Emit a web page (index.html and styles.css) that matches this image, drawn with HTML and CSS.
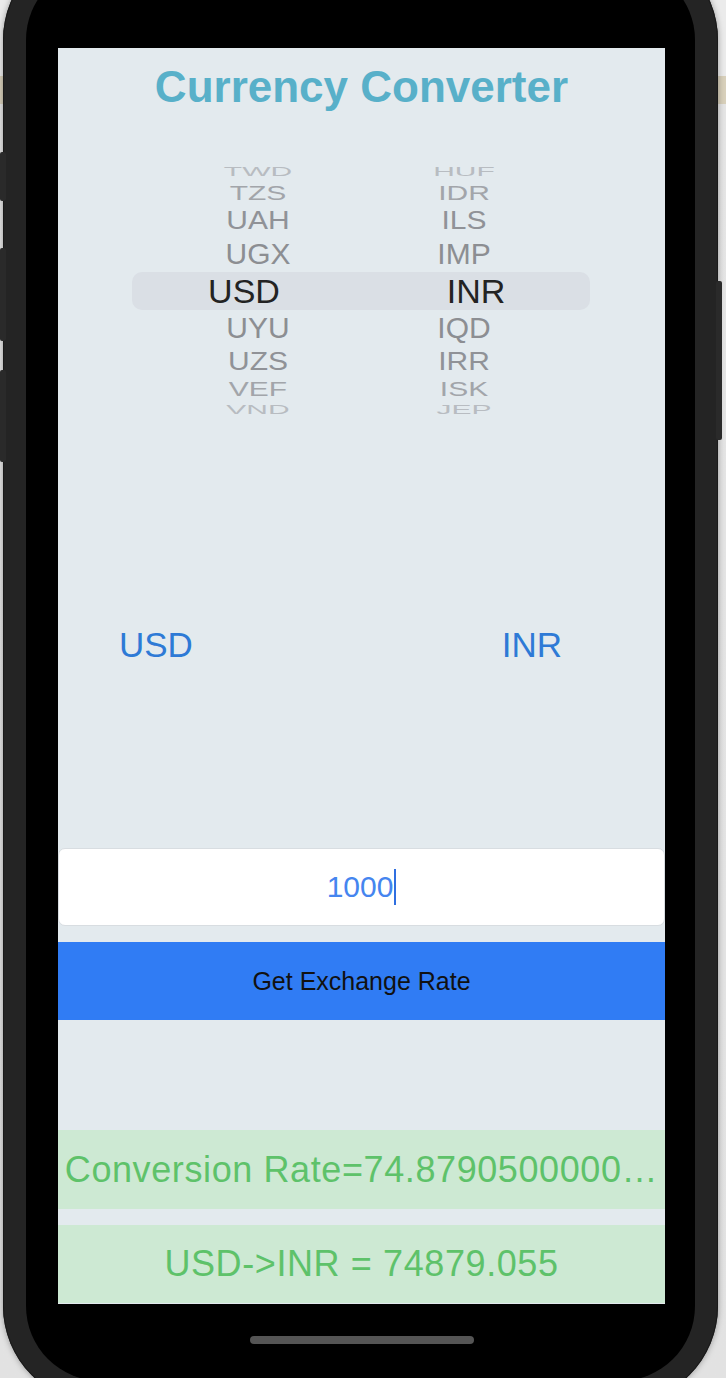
FILE: index.html
```html
<!DOCTYPE html>
<html lang="en">
<head>
<meta charset="utf-8">
<title>Currency Converter</title>
<link rel="stylesheet" href="styles.css">
</head>
<body>
<div class="desk">
  <div class="phone">
    <span class="hw hw-l1"></span>
    <span class="hw hw-l2"></span>
    <span class="hw hw-l3"></span>
    <span class="hw hw-r1"></span>
    <div class="bezel">
      <main class="screen">
        <h1 class="title">Currency Converter</h1>
        <div class="picker">
          <div class="row far"><span>TWD</span><span>HUF</span></div>
          <div class="row mid"><span>TZS</span><span>IDR</span></div>
          <div class="row near"><span>UAH</span><span>ILS</span></div>
          <div class="row adj"><span>UGX</span><span>IMP</span></div>
          <div class="row sel"><span class="sel-l">USD</span><span class="sel-r">INR</span></div>
          <div class="row adj"><span>UYU</span><span>IQD</span></div>
          <div class="row near"><span>UZS</span><span>IRR</span></div>
          <div class="row mid"><span>VEF</span><span>ISK</span></div>
          <div class="row far"><span>VND</span><span>JEP</span></div>
        </div>
        <div class="labels"><span>USD</span><span>INR</span></div>
        <div class="amount"><span class="value">1000</span><span class="caret"></span></div>
        <button class="btn" type="button">Get Exchange Rate</button>
        <div class="result rate">Conversion Rate=74.8790500000…</div>
        <div class="result total">USD-&gt;INR = 74879.055</div>
      </main>
      <div class="home"></div>
    </div>
  </div>
</div>
</body>
</html>
```
FILE: styles.css
```css
html, body {
  margin: 0;
  padding: 0;
  height: 100%;
  overflow: hidden;
}
body {
  background: linear-gradient(to bottom, #ebebeb 0, #ebebeb 76px, #d8d0bb 76px, #d8d0bb 104px, #e5e5e5 104px, #e2e2e2 100%);
  font-family: "Liberation Sans", Arial, sans-serif;
}
.desk {
  padding-left: 3px;
}
.phone {
  position: relative;
  margin-top: -58px;
  width: 715px;
  height: 1462px;
  box-sizing: border-box;
  padding: 23px;
  border-radius: 98px;
  background: #242424;
  box-shadow: 0 0 0 1px #1a1a1a inset, 0 0 6px rgba(0,0,0,0.35);
}
.hw {
  position: absolute;
  width: 6px;
  background: #2a2a2a;
  border-radius: 2px;
}
.hw-l1 { left: -3px; top: 210px; height: 49px; }
.hw-l2 { left: -3px; top: 306px; height: 93px; }
.hw-l3 { left: -3px; top: 428px; height: 92px; }
.hw-r1 { right: -4px; top: 339px; height: 159px; }
.bezel {
  height: 100%;
  box-sizing: border-box;
  background: #000;
  border-radius: 75px;
  padding: 83px 30px 0 32px;
}
.screen {
  height: 1256px;
  background: #e3eaee;
  display: flex;
  flex-direction: column;
  padding-top: 17px;
  box-sizing: border-box;
}
.title {
  margin: 0;
  font-weight: 700;
  font-size: 44px;
  line-height: 44px;
  color: #58b0c9;
  text-align: center;
}
.picker {
  margin: 54px 75px 0 74px;
  height: 251px;
  overflow: hidden;
}
.row {
  display: grid;
  grid-template-columns: 252px 160px;
  grid-template-rows: minmax(0, 1fr);
  justify-items: center;
  font-size: 30px;
  color: #8d8f93;
}
.row span { display: block; }
.far { height: 18px; line-height: 18px; color: #b8bcc1; }
.far span { transform: scaleY(0.42); }
.mid { height: 24px; line-height: 24px; color: #a2a5aa; }
.mid span { transform: scaleY(0.68); }
.near { height: 31px; line-height: 31px; color: #909297; }
.near span { transform: scaleY(0.84); }
.adj { height: 36px; line-height: 36px; color: #8c8e92; }
.adj span { transform: scaleY(0.97); }
.sel {
  height: 38px;
  line-height: 38px;
  background: #dadfe5;
  border-radius: 10px;
  font-size: 34px;
  color: #232323;
}
.sel-l { transform: translateX(-14px); }
.sel-r { transform: translateX(12px); }
.labels {
  margin-top: 211px;
  display: flex;
  justify-content: space-between;
  padding: 0 103px 0 61px;
  font-size: 35px;
  line-height: 40px;
  color: #2e7ad6;
}
.amount {
  margin-top: 183px;
  height: 78px;
  box-sizing: border-box;
  background: #fff;
  border: 1px solid #d8dde1;
  border-radius: 7px;
  display: flex;
  align-items: center;
  justify-content: center;
  font-size: 30px;
  color: #4585ef;
}
.caret {
  width: 2px;
  height: 36px;
  background: #2f6fe0;
  margin-left: 1px;
}
.btn {
  margin: 16px 0 0;
  height: 78px;
  border: 0;
  padding: 0;
  background: #307cf4;
  font-family: "Liberation Sans", Arial, sans-serif;
  font-size: 25px;
  color: #111;
}
.result {
  background: #cde9d3;
  color: #5ec26a;
  display: flex;
  align-items: center;
  justify-content: center;
  white-space: nowrap;
  overflow: hidden;
  font-size: 36px;
  letter-spacing: 0.6px;
}
.rate { margin-top: 110px; height: 79px; }
.total { margin-top: 16px; height: 78px; }
.home {
  width: 224px;
  height: 8px;
  border-radius: 4px;
  background: #555;
  margin: 32px auto 0;
}
```
